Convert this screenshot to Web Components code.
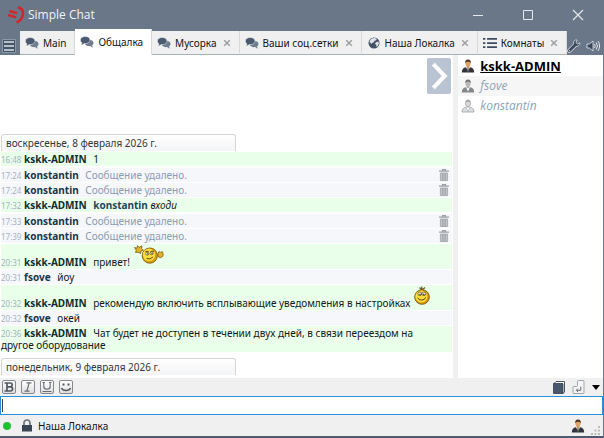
<!DOCTYPE html>
<html lang="ru">
<head>
<meta charset="utf-8">
<title>Simple Chat</title>
<style>
html, body {
  height: 100%;
  margin: 0;
}
body {
  font: 10px/12px "Noto Sans", "DejaVu Sans", sans-serif;
  color: #14181c;
}
</style>
</head>
<body>
<chat-app></chat-app>

<script>
const ICONS = {
  logo: `<svg viewBox="0 0 18 18"><g fill="none" stroke="#d2262e"><path d="M2.500 5l7.500 2.200M1.200 9l8 2.400" stroke-width="2.400"/><path d="M11 1.300c4.500 1.200 5.500 4.500 4.700 8-.7 3.500-2.700 5.800-6.200 7.200" stroke-width="2.600"/></g></svg>`,
  minimize: `<svg viewBox="0 0 12 12"><path d="M1 6.500h10" stroke="#e4e9ee"/></svg>`,
  maximize: `<svg viewBox="0 0 12 12"><path d="M1.500 1.500h9v9h-9z" fill="none" stroke="#e4e9ee"/></svg>`,
  close: `<svg viewBox="0 0 12 12"><path d="M1 1l10 10M11 1L1 11" stroke="#e4e9ee" stroke-width="1.200"/></svg>`,
  menu: `<svg viewBox="0 0 14 14"><path d="M.5.500h13v13H.5z" fill="#465469" stroke="#8b98a8"/><path d="M2 3h10M2 7h10M2 11h10" stroke="#dce2e8" stroke-width="1.700"/></svg>`,
  chat: `<svg viewBox="0 0 14 12"><path d="M8 3.500c3.500 0 5.500 1.500 5.500 3.500 0 1.200-.7 2-1.500 2.500l.9 2c-1.300-.2-2.100-.8-2.700-1.400C7.500 10.300 5.500 9.500 5 8.300z" fill="#6f7d8f"/><path d="M5.200.5C8 .5 10 2 10 4s-2 3.600-4.800 3.600h-1C3.500 8.500 2.300 9 1 9l1-2.100C1 6.300.4 5.200.4 4 .4 2 2.500.5 5.200.5z" fill="#4a5a70" stroke="#f4f4f4" stroke-width=".5"/></svg>`,
  globe: `<svg viewBox="0 0 12 12"><circle cx="6" cy="6" r="5.500" fill="#445166"/><path d="M4.500 1.200L7 1l1.800 1.200-1 1.200-1.300.3-.5 1.500-1.600.5L3.200 7l-1-1.500-.8-.8C1.900 3 3 1.800 4.500 1.200zM8 5.200l2.400-.6.5 1.800-1 2.400-1.200 1.100L8.200 8 7 6.800z" fill="#dde2e9"/></svg>`,
  list: `<svg viewBox="0 0 12 10"><path d="M0 1.500h2M0 5h2M0 8.500h2M3.500 1.500H12M3.500 5H12M3.500 8.500H12" stroke="#3f4b5d" stroke-width="1.500"/></svg>`,
  cross: `<svg viewBox="0 0 8 8"><path d="M1.200 1.200l5.600 5.600M6.800 1.200L1.200 6.800" stroke="#9b9fa4" stroke-width="1.500"/></svg>`,
  wrench: `<svg viewBox="0 0 14 14"><path d="M2.300 11.800l5.400-5.300" stroke="#d9dfe6" stroke-width="4.200" stroke-linecap="round"/><path d="M12.800 3.800l-2.300 1.300-1.600-1.500L10.200 1C8 .4 6 2.200 6.700 4.500 7 6.800 9.200 7.700 11 7.100c1.300-.6 2.200-1.900 1.800-3.300z" fill="#39465a" stroke="#d9dfe6" stroke-width=".8"/><path d="M2.300 11.800l6-6" stroke="#39465a" stroke-width="2.700" stroke-linecap="round"/><circle cx="2.500" cy="11.600" r=".6" fill="#d9dfe6"/></svg>`,
  sound: `<svg viewBox="0 0 14 12"><path d="M1 4h2.500L7 1v10L3.500 8H1z" fill="#39465a" stroke="#d9dfe6" stroke-width=".9"/><path d="M8.500 4q1.500 2 0 4M10.200 2.500q2.600 3.500 0 7M12 1q3.200 5 0 10" fill="none" stroke="#dfe4ea"/></svg>`,
  chevron: `<svg viewBox="0 0 23 35"><path d="M6 6l11 11.500L6 29" fill="none" stroke="#fff" stroke-width="4"/></svg>`,
  trash: `<svg viewBox="0 0 10 12"><path d="M3.500 1.500V.6h3v.9M0 2.200h10" fill="none" stroke="#9ea1a5" stroke-width="1.200"/><path d="M1.400 4h7.200v7.500H1.400z" fill="#c4c6c9" stroke="#9ea1a5" stroke-width=".8"/><path d="M3.500 4.500v6.500M5 4.500v6.500M6.500 4.500v6.500" stroke="#999ca0" stroke-width=".7"/></svg>`,
  admin: `<svg viewBox="0 0 14 14"><path d="M.8 13.500c0-3.500 1.700-5 4-5.300h4.400c2.300.3 4 1.800 4 5.300z" fill="#30343a"/><path d="M5 8h4l-2 4.500z" fill="#fff"/><path d="M6.500 9h1l.4 3.200-.9 1-.9-1z" fill="#555"/><path d="M5.700 6h2.600v2.500L7 9.500 5.700 8.500z" fill="#c98a4c"/><ellipse cx="7" cy="4.500" rx="2.500" ry="3.200" fill="#dfa164"/><path d="M4.300 4.500C3.800 1.500 5 .4 7 .4s3.200 1.100 2.700 4.100C9 3.200 8.500 2.600 7 2.800 5.500 2.700 5 3.200 4.300 4.500z" fill="#4b3020"/></svg>`,
  user: `<svg viewBox="0 0 14 14"><path d="M.8 13.500c0-3.500 1.700-5 4-5.300h4.400c2.300.3 4 1.800 4 5.300z" fill="#85888b"/><path d="M5 8h4l-2 4.500z" fill="#fff"/><path d="M5.700 6h2.600v2.500L7 9.500 5.700 8.500z" fill="#a6a6a6"/><ellipse cx="7" cy="4.500" rx="2.500" ry="3.200" fill="#b8b8b8"/><path d="M4.300 4.500C3.800 1.500 5 .4 7 .4s3.200 1.100 2.700 4.100C9 3.200 8.500 2.600 7 2.800 5.500 2.700 5 3.200 4.300 4.500z" fill="#777"/></svg>`,
  away: `<svg viewBox="0 0 14 14"><path d="M1 13c0-3 1.700-4.400 4-4.700h4c2.300.3 4 1.700 4 4.700z" fill="#dcdee0" stroke="#a6a9ac" stroke-width=".9"/><path d="M5 8.500l2 4 2-4" fill="#fff" stroke="#a6a9ac" stroke-width=".6"/><ellipse cx="7" cy="4.400" rx="2.500" ry="3.400" fill="#d9d9d9" stroke="#a3a3a3" stroke-width=".8"/><path d="M4.500 3.600C4.700 1.500 5.500.8 7 .8s2.300.7 2.500 2.800C8 2.600 6 2.600 4.500 3.600z" fill="#a8a8a8"/></svg>`,
  bold: `<svg viewBox="0 0 12 12"><path d="M1.500 2h5.800c2.500 0 2.500 3.500.2 3.900 3 .2 2.800 4.100-.4 4.100H1.500M4 2v8M4 5.900h4" fill="none" stroke="#54585d" stroke-width="1.700"/></svg>`,
  italic: `<svg viewBox="0 0 12 12"><path d="M4.500 1.800H9.500M2.500 10.200H7.500M7.200 1.800L4.800 10.200" fill="none" stroke="#6a6e73" stroke-width="1.200"/></svg>`,
  underline: `<svg viewBox="0 0 12 12"><path d="M1.500 1.500h2.500M8 1.500h2.500M2.800 1.500v4c0 3.600 6.400 3.600 6.400 0v-4M1.500 10.500h9" fill="none" stroke="#6a6e73" stroke-width="1.100"/></svg>`,
  smile: `<svg viewBox="0 0 12 12"><path d="M2.500 2.500h2v2h-2zM7.500 2.500h2v2h-2z" fill="#54585d"/><path d="M1.500 7q1 2.500 4.500 2.500T10.500 7" fill="none" stroke="#54585d" stroke-width="1.500"/></svg>`,
  book: `<svg viewBox="0 0 12 13"><path d="M1 2.500L3 .5h8.500v10.500L10 12.500z" fill="#fff" stroke="#39434f" stroke-width=".9"/><path d="M.5 2.500H10v10H.5z" fill="#4a586b" stroke="#333e4c" stroke-width=".8"/></svg>`,
  enter: `<svg viewBox="0 0 13 14"><path d="M5.500 1.500q0-1 1-1H11q1 0 1 1v11q0 1-1 1H2q-1 0-1-1V7.500q0-1 1-1h2.500q1 0 1-1z" fill="#f5f6f7" stroke="#979ba0" stroke-width=".9"/><path d="M8.800 6.500v3.800H4.500M6 8.600l-1.700 1.700L6 12" fill="none" stroke="#676c72"/></svg>`,
  arrow: `<svg viewBox="0 0 8 5"><path d="M0 0h8L4 5z" fill="#000"/></svg>`,
  lock: `<svg viewBox="0 0 12 13"><path d="M3 6V4c0-4 6-4 6 0v2" fill="none" stroke="#6d7581" stroke-width="1.700"/><path d="M1 6h10v6.500H1z" fill="#394555"/></svg>`,
  grip: `<svg viewBox="0 0 10 10"><path d="M7 0h2v2H7zM3.500 3.500h2v2h-2zM7 3.500h2v2H7zM0 7h2v2H0zM3.500 7h2v2h-2zM7 7h2v2H7z" fill="#b9bcbf"/></svg>`,
  wave: `<svg viewBox="0 0 30 19"><g fill="#e3b526" stroke="#7a5a12" stroke-width=".8"><path d="M.5 2.500l2.500.8L3.500.5l1.500 2L8 .8 7.500 3.500l1.800 1.700L7 6l-.5 2.500L4 7.200 1.500 7.500l.8-2.300z"/><path d="M24 8.500l1-2 1.500 1 1.700-1 .9 2-.2 2.700-2.400 1.500-2.400-1z"/></g><circle cx="15.800" cy="10.600" r="7.600" fill="#d9a010" stroke="#7a560c" stroke-width=".9"/><circle cx="15" cy="9.800" r="6.200" fill="#fbdc3e"/><path d="M11.300 6.800q2-1.200 3.500.2M16.300 7q1.800-1.700 3.700-.6" fill="none" stroke="#4a350a" stroke-width=".9"/><ellipse cx="13.300" cy="8.700" rx="1.600" ry="1.300" fill="#fff" stroke="#4a350a" stroke-width=".6"/><ellipse cx="17.700" cy="8.300" rx="1.600" ry="1.300" fill="#fff" stroke="#4a350a" stroke-width=".6"/><circle cx="13.800" cy="8.900" r=".6"/><circle cx="18" cy="8.500" r=".6"/><path d="M12.500 13.500q3.500 1.500 6.500-1.500" fill="none" stroke="#6b4a0a"/></svg>`,
  grin: `<svg viewBox="0 0 16 19"><path d="M8 4L5.500 1.500M8 4L7.700.5M8 4l3-2.500" stroke="#6b5428" stroke-width="1.200"/><circle cx="8" cy="11" r="7.300" fill="#d69c10" stroke="#73520e" stroke-width=".9"/><circle cx="7.400" cy="10.400" r="6" fill="#fbdc3a"/><ellipse cx="5.800" cy="7.800" rx="1.900" ry="1.800" fill="#fff" stroke="#4a380f" stroke-width=".7"/><ellipse cx="9.900" cy="7.800" rx="1.900" ry="1.800" fill="#fff" stroke="#4a380f" stroke-width=".7"/><path d="M5.200 8.200h1.600M9 8.200h1.600" stroke="#2c2007" stroke-width="1.100"/><path d="M3.500 12q4.500 4.500 8.500-.5" fill="none" stroke="#6b3a08"/></svg>`
};

class UiIcon extends HTMLElement {
  connectedCallback() {
    const w = this.getAttribute("w") || 14;
    const h = this.getAttribute("h") || w;
    this.attachShadow({ mode: "open" }).innerHTML = `
      <style>
        :host { display: inline-block; flex: none; width: ${w}px; height: ${h}px; }
        svg { display: block; width: 100%; height: 100%; }
      </style>
      ${ICONS[this.getAttribute("name")]}`;
  }
}
customElements.define("ui-icon", UiIcon);

class TitleBar extends HTMLElement {
  connectedCallback() {
    this.attachShadow({ mode: "open" }).innerHTML = `
      <style>
        :host {
          display: flex;
          align-items: center;
          height: 29px;
          padding-left: 7px;
          background: #697789;
          color: #f1f3f6;
          font: 12px/16px "Open Sans", sans-serif;
        }
        h1 { flex: 1; margin: 0 0 0 3px; font: inherit; }
        button {
          display: flex;
          justify-content: center;
          width: 50px;
          padding: 0;
          border: 0;
          background: none;
        }
      </style>
      <ui-icon name="logo" w="18"></ui-icon>
      <h1><slot></slot></h1>
      <button aria-label="Свернуть"><ui-icon name="minimize" w="12"></ui-icon></button>
      <button aria-label="Развернуть"><ui-icon name="maximize" w="12"></ui-icon></button>
      <button aria-label="Закрыть"><ui-icon name="close" w="12"></ui-icon></button>`;
  }
}
customElements.define("title-bar", TitleBar);

class ChatTab extends HTMLElement {
  connectedCallback() {
    const closable = this.hasAttribute("closable");
    this.attachShadow({ mode: "open" }).innerHTML = `
      <style>
        :host {
          display: flex;
          align-items: center;
          box-sizing: border-box;
          height: 24px;
          padding: 0 8px 0 5px;
          gap: 6px;
          background: #f0f0f0;
          border-right: 1px solid #d6d8da;
          border-bottom: 1px solid #a9afb6;
          color: #101214;
        }
        :host([active]) { height: 26px; background: #fff; border-bottom-color: #fff; }
        button {
          display: flex;
          align-items: center;
          gap: 4px;
          padding: 0;
          border: 0;
          background: none;
          font: inherit;
          color: inherit;
          white-space: nowrap;
        }
      </style>
      <button><ui-icon name="${this.getAttribute("icon")}" w="14" h="12"></ui-icon><slot></slot></button>
      ${closable ? `<button aria-label="Закрыть вкладку"><ui-icon name="cross" w="8"></ui-icon></button>` : ""}`;
  }
}
customElements.define("chat-tab", ChatTab);

class TabBar extends HTMLElement {
  connectedCallback() {
    this.attachShadow({ mode: "open" }).innerHTML = `
      <style>
        :host {
          display: flex;
          align-items: flex-end;
          height: 26px;
          background: #697789;
        }
        .tabs { display: flex; align-items: flex-end; flex: 1; }
        .tools { display: flex; align-items: center; gap: 5px; padding: 0 3px 2px 0; }
        button { padding: 0; border: 0; background: none; display: flex; }
        .menu { margin: 0 4px 2px 2px; }
      </style>
      <button class="menu" aria-label="Меню"><ui-icon name="menu" w="14"></ui-icon></button>
      <div class="tabs"><slot></slot></div>
      <div class="tools">
        <button aria-label="Настройки"><ui-icon name="wrench" w="14"></ui-icon></button>
        <button aria-label="Звук"><ui-icon name="sound" w="14" h="12"></ui-icon></button>
      </div>`;
  }
}
customElements.define("tab-bar", TabBar);

class ChatDate extends HTMLElement {
  connectedCallback() {
    this.attachShadow({ mode: "open" }).innerHTML = `
      <style>
        :host {
          display: block;
          box-sizing: border-box;
          width: 52%;
          height: 17px;
          margin: 4px 0 1px;
          padding: 2px 4px 0;
          border: 1px solid #d4d6d9;
          border-bottom: 0;
          border-radius: 3px 3px 0 0;
          background: linear-gradient(#fff, #f3f4f5);
          color: #33373d;
        }
      </style>
      <slot></slot>`;
  }
}
customElements.define("chat-date", ChatDate);

class ChatMessage extends HTMLElement {
  connectedCallback() {
    const deleted = this.hasAttribute("deleted");
    this.attachShadow({ mode: "open" }).innerHTML = `
      <style>
        :host {
          display: flex;
          align-items: center;
          margin-bottom: 1px;
          padding: 1px 0;
          background: #f6f7fa;
        }
        :host([own]) { background: #eaffea; margin-bottom: 2px; }
        :host([tall]) { margin-bottom: 1px; }
        p { flex: 1; margin: 0; padding-right: 8px; }
        time { font-size: 8px; line-height: 8px; color: #a5b3c4; }
        b { margin-right: 4px; color: #17364a; }
        :host([own]) b { color: #122c30; }
        :host([deleted]) slot { color: #8b9cb5; }
        ::slotted(ui-icon) { margin-left: 1px; vertical-align: 2px; }
        ::slotted(b) { color: #1d4661; }
        button { display: flex; padding: 0 3px; border: 0; background: none; }
      </style>
      <p><time>${this.getAttribute("time")}</time> <b>${this.getAttribute("from")}</b> <slot></slot></p>
      ${deleted ? `<button aria-label="Удалить"><ui-icon name="trash" w="10" h="12"></ui-icon></button>` : ""}`;
  }
}
customElements.define("chat-message", ChatMessage);

class ChatLog extends HTMLElement {
  connectedCallback() {
    this.attachShadow({ mode: "open" }).innerHTML = `
      <style>
        :host {
          position: relative;
          display: flex;
          flex-direction: column;
          justify-content: flex-end;
          flex: 1;
          min-width: 0;
          padding: 0 1px 2px;
          background: #fff;
          border-right: 5px solid #f0f0f0;
        }
        .next {
          position: absolute;
          top: 3px;
          right: 2px;
          padding: 0;
          border: 0;
          border-radius: 2px;
          background: #b9c3d2;
          display: flex;
        }
      </style>
      <slot></slot>
      <button class="next" aria-label="Скрыть список"><ui-icon name="chevron" w="24" h="36"></ui-icon></button>`;
  }
}
customElements.define("chat-log", ChatLog);

class UserItem extends HTMLElement {
  connectedCallback() {
    this.attachShadow({ mode: "open" }).innerHTML = `
      <style>
        :host { display: block; font: 12px/20px "Open Sans", sans-serif; }
        :host(:nth-child(even)) { background: #f6f6f6; }
        button {
          display: flex;
          align-items: center;
          gap: 5px;
          width: 100%;
          height: 20px;
          padding: 0 3px;
          border: 0;
          background: none;
          font: inherit;
          font-style: italic;
          color: #8ea3b9;
        }
        :host([me]) button {
          font-size: 13px;
          font-style: normal;
          font-weight: 700;
          color: #000;
          text-decoration: underline;
        }
      </style>
      <button><ui-icon name="${this.getAttribute("icon")}" w="14"></ui-icon><slot></slot></button>`;
  }
}
customElements.define("user-item", UserItem);

class FormatBar extends HTMLElement {
  connectedCallback() {
    this.attachShadow({ mode: "open" }).innerHTML = `
      <style>
        :host {
          display: flex;
          align-items: center;
          justify-content: space-between;
          height: 18px;
          padding: 0 3px 0 2px;
          background: #f0f0f0;
        }
        div { display: flex; align-items: center; gap: 5px; }
        .actions { gap: 7px; }
        button { display: flex; padding: 0; border: 0; background: none; }
        .key {
          box-sizing: border-box;
          width: 14px;
          height: 14px;
          border: 1px solid #85898e;
          border-radius: 2px;
          background: linear-gradient(#fff, #dcdddf);
        }
      </style>
      <div>
        <button class="key" aria-label="Жирный"><ui-icon name="bold" w="12"></ui-icon></button>
        <button class="key" aria-label="Курсив"><ui-icon name="italic" w="12"></ui-icon></button>
        <button class="key" aria-label="Подчёркнутый"><ui-icon name="underline" w="12"></ui-icon></button>
        <button class="key" aria-label="Смайлы"><ui-icon name="smile" w="12"></ui-icon></button>
      </div>
      <div class="actions">
        <button aria-label="История"><ui-icon name="book" w="12" h="13"></ui-icon></button>
        <button aria-label="Отправить"><ui-icon name="enter" w="13" h="14"></ui-icon></button>
        <button aria-label="Ещё"><ui-icon name="arrow" w="8" h="5"></ui-icon></button>
      </div>`;
  }
}
customElements.define("format-bar", FormatBar);

class MessageInput extends HTMLElement {
  connectedCallback() {
    this.attachShadow({ mode: "open" }).innerHTML = `
      <style>
        :host { display: block; }
        input {
          display: block;
          box-sizing: border-box;
          width: 100%;
          height: 19px;
          padding: 0 3px;
          border: 1px solid #2a90dc;
          outline: 0;
          font: inherit;
          background: linear-gradient(#444, #444) 1px 2px / 1px 13px no-repeat #fff;
        }
        input:focus { background: #fff; }
      </style>
      <input type="text" aria-label="Сообщение">`;
  }
}
customElements.define("message-input", MessageInput);

class StatusBar extends HTMLElement {
  connectedCallback() {
    this.attachShadow({ mode: "open" }).innerHTML = `
      <style>
        :host {
          display: flex;
          align-items: center;
          height: 21px;
          padding: 0 2px 0 3px;
          background: #f0f0f0;
          color: #101214;
        }
        .dot {
          width: 8px;
          height: 8px;
          margin-right: 10px;
          border-radius: 50%;
          background: radial-gradient(#18c42c 40%, #4fae57);
        }
        .text { flex: 1; margin-left: 5px; }
        .grip { align-self: flex-end; margin-left: 6px; }
      </style>
      <span class="dot"></span>
      <ui-icon name="lock" w="12" h="13"></ui-icon>
      <span class="text"><slot></slot></span>
      <ui-icon name="admin" w="14"></ui-icon>
      <ui-icon class="grip" name="grip" w="10"></ui-icon>`;
  }
}
customElements.define("status-bar", StatusBar);

const template = document.createElement("template");
template.innerHTML = `
<style>
:host {
  display: flex;
  flex-direction: column;
  box-sizing: border-box;
  height: 100vh;
  border-right: 1px solid #697789;
  border-bottom: 2px solid #4e5a70;
}
main {
  display: flex;
  flex: 1;
  min-height: 0;
}
aside {
  box-sizing: border-box;
  width: 24%;
  padding-top: 1px;
  background: #fff;
}
</style>

<title-bar>Simple Chat</title-bar>
<tab-bar>
  <chat-tab icon="chat">Main</chat-tab>
  <chat-tab icon="chat" active>Общалка</chat-tab>
  <chat-tab icon="chat" closable>Мусорка</chat-tab>
  <chat-tab icon="chat" closable>Ваши соц.сетки</chat-tab>
  <chat-tab icon="globe" closable>Наша Локалка</chat-tab>
  <chat-tab icon="list" closable>Комнаты</chat-tab>
</tab-bar>
<main>
  <chat-log>
    <chat-date>воскресенье, 8 февраля 2026 г.</chat-date>
    <chat-message time="16:48" from="kskk-ADMIN" own>1</chat-message>
    <chat-message time="17:24" from="konstantin" deleted>Сообщение удалено.</chat-message>
    <chat-message time="17:24" from="konstantin" deleted>Сообщение удалено.</chat-message>
    <chat-message time="17:32" from="kskk-ADMIN" own><b>konstantin</b> <i>входи</i></chat-message>
    <chat-message time="17:33" from="konstantin" deleted>Сообщение удалено.</chat-message>
    <chat-message time="17:39" from="konstantin" deleted>Сообщение удалено.</chat-message>
    <chat-message time="20:31" from="kskk-ADMIN" own tall>привет! <ui-icon name="wave" w="30" h="19"></ui-icon></chat-message>
    <chat-message time="20:31" from="fsove">йоу</chat-message>
    <chat-message time="20:32" from="kskk-ADMIN" own tall>рекомендую включить всплывающие уведомления в настройках <ui-icon name="grin" w="16" h="19"></ui-icon></chat-message>
    <chat-message time="20:32" from="fsove">окей</chat-message>
    <chat-message time="20:36" from="kskk-ADMIN" own>Чат будет не доступен в течении двух дней, в связи переездом на другое оборудование</chat-message>
    <chat-date>понедельник, 9 февраля 2026 г.</chat-date>
  </chat-log>
  <aside>
    <user-item icon="admin" me>kskk-ADMIN</user-item>
    <user-item icon="user">fsove</user-item>
    <user-item icon="away">konstantin</user-item>
  </aside>
</main>
<format-bar></format-bar>
<message-input></message-input>
<status-bar>Наша Локалка</status-bar>
`;

class ChatApp extends HTMLElement {
  constructor() {
    super();
    this.attachShadow({ mode: "open" });
    this.shadowRoot.appendChild(template.content.cloneNode(true));
  }
}
customElements.define("chat-app", ChatApp);
</script>
</body>
</html>
